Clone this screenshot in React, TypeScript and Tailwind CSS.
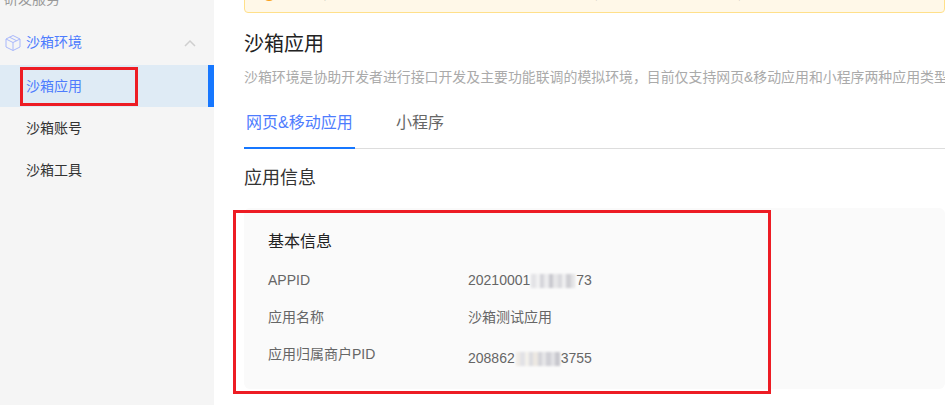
const FONT = "font-['Liberation_Sans','Noto_Sans_CJK_SC',sans-serif]";

const SUB_ITEMS = ["沙箱账号", "沙箱工具"];

// pixelated redaction over part of the ids
const APPID_MOSAIC = ["#e3e3e6", "#f1f1f2", "#d5d5da", "#ececee", "#c9c9cf", "#e6e6e8", "#d9d9dd", "#efeff0", "#cfcfd4", "#e4e4e6"];
const PID_MOSAIC = ["#f0ece6", "#e2e2e6", "#f3f1ec", "#dcdce0", "#ece8e2", "#d4d4d9", "#e6e6e8", "#d0d0d6", "#e2e2e5", "#c8c8ce"];

function BoxIcon() {
  return (
    <svg width="18" height="18" viewBox="0 0 18 18" fill="none" stroke="#a9b8fb" strokeWidth="1" className="shrink-0">
      <path d="M9 1.5 16 5v8l-7 3.5L2 13V5z" />
      <path d="M2 5l7 3.5L16 5M9 8.5v8M5.5 3.2l7 3.5" />
    </svg>
  );
}

function InfoRow({ label, children, valueClass = "" }: { label: string; children: React.ReactNode; valueClass?: string }) {
  return (
    <div className="flex h-[37px] items-center text-[14px] text-[#666]">
      <span className="w-[200px] shrink-0">{label}</span>
      <span className={`flex items-center ${valueClass}`}>{children}</span>
    </div>
  );
}

function Mosaic({ colors }: { colors: string[] }) {
  return (
    <span className="mx-[1px] inline-flex h-[14px] blur-[1px]">
      {colors.map((c, i) => (
        <span key={i} className="h-full w-[4.4px]" style={{ backgroundColor: c }} />
      ))}
    </span>
  );
}

export default function App() {
  return (
    <div className={`${FONT} relative flex h-[405px] w-[945px] overflow-hidden bg-white`}>
      {/* Sidebar */}
      <aside className="flex w-[214px] shrink-0 flex-col bg-[#f5f5f5]">
        <div className="mt-[-11px] h-[20px] pl-[4px] text-[14px] leading-[20px] text-[#999]">研发服务</div>
        <div className="mt-[11px] flex h-[45px] items-center pl-[4px] pr-[18px] text-[14px] text-[#4d7cfe]">
          <BoxIcon />
          <span className="ml-[4px] flex-1">沙箱环境</span>
          <svg width="12" height="8" viewBox="0 0 12 8" fill="none" stroke="#cfcfcf" strokeWidth="1.5">
            <path d="M1 7l5-5 5 5" />
          </svg>
        </div>
        <div className="flex h-[42px] items-center border-r-[6px] border-[#1677ff] bg-[#dfebf5] pl-[26px] text-[14px] text-[#4d7cfe]">
          沙箱应用
        </div>
        {SUB_ITEMS.map((item) => (
          <div key={item} className="flex h-[42px] items-center pl-[26px] text-[14px] text-[#333]">
            {item}
          </div>
        ))}
      </aside>

      {/* Main */}
      <main className="min-w-0 flex-1 pl-[30px]">
        <div className="mt-[-26px] flex h-[39px] items-center gap-[6px] overflow-hidden whitespace-nowrap rounded-[4px] border border-[#ffe08a] bg-[#fff8e8] pl-[17px] text-[13px] text-[#666]">
          <span className="h-[14px] w-[14px] shrink-0 rounded-full bg-[#fa9d14]" />
          <span>请开发者注意沙箱环境的接口调用数据仅用于联调测试，不可用于线上正式业务，否则将影响使用</span>
        </div>

        <h1 className="mt-[17px] text-[20px] font-normal leading-[28px] text-[#222]">沙箱应用</h1>
        <p className="mt-[9px] whitespace-nowrap text-[13.9px] leading-[20px] text-[#aaa]">
          沙箱环境是协助开发者进行接口开发及主要功能联调的模拟环境，目前仅支持网页&amp;移动应用和小程序两种应用类型
        </p>

        {/* Tabs */}
        <div className="mt-[18px] flex h-[44px] border-b border-[#ddd] text-[16px] leading-[36px]">
          <div className="mb-[-1px] w-[111px] border-b-2 border-[#1677ff] pl-[2px] text-[#4d7cfe]">网页&amp;移动应用</div>
          <div className="ml-[41px] text-[#666]">小程序</div>
        </div>

        <h2 className="mt-[15px] text-[18px] font-normal leading-[28px] text-[#333]">应用信息</h2>

        {/* Basic info panel */}
        <section className="mt-[16px] h-[181px] rounded-[6px] bg-[#fafafa] pl-[24px] pt-[23px]">
          <h3 className="mb-[9px] text-[16px] font-normal leading-[22px] text-[#222]">基本信息</h3>
          <InfoRow label="APPID">
            20210001
            <Mosaic colors={APPID_MOSAIC} />
            73
          </InfoRow>
          <InfoRow label="应用名称">沙箱测试应用</InfoRow>
          <InfoRow label="应用归属商户PID" valueClass="mt-[8px]">
            208862
            <Mosaic colors={PID_MOSAIC} />
            3755
          </InfoRow>
        </section>
      </main>

      {/* Annotations */}
      <div className="absolute left-[20px] top-[67px] h-[39px] w-[118px] border-[3px] border-[#ed1c24]" />
      <div className="absolute left-[233px] top-[210px] h-[184px] w-[538px] border-[3px] border-[#ed1c24]" />
    </div>
  );
}
